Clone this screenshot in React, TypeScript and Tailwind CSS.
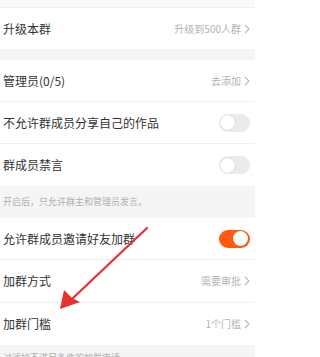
import { ReactNode } from 'react'

const font = { fontFamily: '"Noto Sans CJK SC", "Noto Sans", sans-serif' }

function Chevron() {
  return (
    <svg width="6" height="10" viewBox="0 0 6 10" className="ml-[3px]">
      <path d="M1 1l4 4-4 4" fill="none" stroke="#b8b8b8" strokeWidth="1.1" />
    </svg>
  )
}

function Toggle({ on }: { on?: boolean }) {
  return (
    <div
      className={
        on
          ? 'flex h-[18px] w-[31px] items-center justify-end rounded-full bg-[#ff5a0f] p-[2px]'
          : 'flex h-[18px] w-[31px] items-center justify-start rounded-full bg-[#ebebeb] p-[1px]'
      }
    >
      <div className="h-[15px] w-[15px] rounded-full bg-white shadow-[0_0_1px_rgba(0,0,0,0.3)]" />
    </div>
  )
}

function Row({
  label,
  right,
  divider,
  h = 'h-[42px]'
}: {
  label: string
  right?: ReactNode
  divider?: boolean
  h?: string
}) {
  return (
    <div
      className={`flex ${h} items-center justify-between bg-white pl-[3px] pr-[5px] ${
        divider ? 'border-b border-[#efefef]' : ''
      }`}
    >
      <span className="text-[12px] leading-none text-[#333333]">{label}</span>
      {right}
    </div>
  )
}

function Value({ text }: { text: string }) {
  return (
    <div className="flex items-center">
      <span className="text-[10px] leading-none text-[#b4b4b4]">{text}</span>
      <Chevron />
    </div>
  )
}

export default function App() {
  return (
    <div className="relative h-[357px] w-[255px] overflow-hidden bg-[#f5f5f6]" style={font}>
      <div className="h-[8px] border-b border-[#eeeeee] bg-[#fafafa]" />
      <Row label="升级本群" right={<Value text="升级到500人群" />} h="h-[41px]" />
      <div className="h-[11px]" />
      <Row label="管理员(0/5)" right={<Value text="去添加" />} divider />
      <Row label="不允许群成员分享自己的作品" right={<Toggle />} divider />
      <Row label="群成员禁言" right={<Toggle />} />
      <div className="flex h-[32px] items-center pl-[3px]">
        <span className="text-[9px] text-[#b0b0b0]">开启后，只允许群主和管理员发言。</span>
      </div>
      <Row label="允许群成员邀请好友加群" right={<Toggle on />} divider />
      <Row label="加群方式" right={<Value text="需要审批" />} divider h="h-[43px]" />
      <Row label="加群门槛" right={<Value text="1个门槛" />} h="h-[42px]" />
      <div className="flex h-[30px] items-start pl-[3px] pt-[6px]">
        <span className="text-[9px] text-[#b0b0b0]">过滤掉不满足条件的加群申请</span>
      </div>

      <svg
        className="pointer-events-none absolute left-0 top-0"
        width="255"
        height="357"
        viewBox="0 0 255 357"
      >
        <line x1="147" y1="228" x2="72" y2="299" stroke="#e8302c" strokeWidth="2.2" strokeLinecap="round" />
        <path d="M60 309 L64 290 L72 298 L80 302 Z" fill="#e8302c" />
      </svg>
    </div>
  )
}
